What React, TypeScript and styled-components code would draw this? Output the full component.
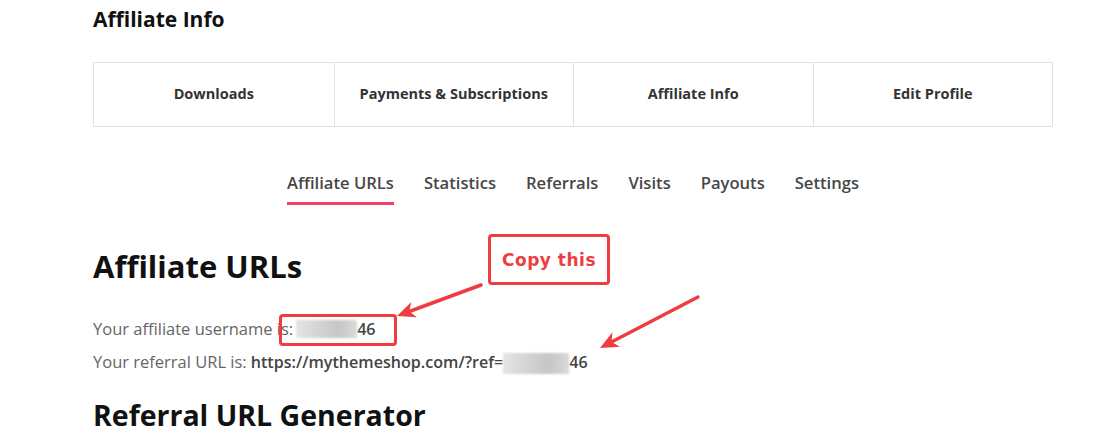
import styled, { createGlobalStyle } from 'styled-components';

const GlobalStyle = createGlobalStyle`
  html, body {
    margin: 0;
    padding: 0;
    background: #ffffff;
  }
  body {
    font-family: "Open Sans", Arial, sans-serif;
    color: #333;
  }
`;

const Page = styled.div`
  position: relative;
  width: 1115px;
  height: 448px;
  overflow: hidden;
  padding-left: 93px;
  box-sizing: border-box;
`;

const Wrap = styled.div`
  width: 960px;
`;

const PageTitle = styled.h1`
  margin: 0;
  padding-top: 6px;
  font-size: 21px;
  font-weight: 700;
  line-height: 26px;
  color: #111;
`;

const NavGrid = styled.div`
  display: grid;
  grid-template-columns: repeat(4, 1fr);
  margin-top: 30px;
  border: 1px solid #e2e2e2;
  height: 65px;
  box-sizing: border-box;
`;

const NavCell = styled.a`
  display: flex;
  align-items: center;
  justify-content: center;
  font-size: 14.5px;
  font-weight: 700;
  color: #333;
  text-decoration: none;
  padding-bottom: 2px;
  & + & {
    border-left: 1px solid #e2e2e2;
  }
`;

const Tabs = styled.div`
  display: flex;
  justify-content: center;
  gap: 30px;
  margin-top: 46px;
`;

const Tab = styled.a<{ $active?: boolean }>`
  font-size: 16.6px;
  font-weight: 600;
  color: #474747;
  text-decoration: none;
  padding-bottom: 9px;
  border-bottom: 3px solid ${(p) => (p.$active ? '#f0416b' : 'transparent')};
  line-height: 20px;
`;

const Heading = styled.h2<{ $size: number; $top: number }>`
  margin: ${(p) => p.$top}px 0 0;
  font-size: ${(p) => p.$size}px;
  font-weight: 700;
  line-height: 1.2;
  color: #111;
`;

const InfoLine = styled.p<{ $top?: number }>`
  margin: ${(p) => p.$top ?? 0}px 0 0;
  font-size: 16.5px;
  height: 33px;
  color: #666;
  display: flex;
  align-items: center;
`;

const Strong = styled.span<{ $gap?: number }>`
  font-size: 16.1px;
  font-weight: 600;
  color: #444;
  margin-left: ${(p) => p.$gap ?? 0}px;
`;

const Blurred = styled.span<{ $w: number; $h: number; $gap?: number }>`
  display: inline-block;
  width: ${(p) => p.$w}px;
  height: ${(p) => p.$h}px;
  margin-left: ${(p) => p.$gap ?? 0}px;
  background: linear-gradient(90deg, #e4e4e4, #d0d0d0 45%, #c6c6c6 70%, #dadada);
  filter: blur(0.8px);
`;

const Annot = styled.div`
  position: absolute;
  border: 3px solid #ee3d40;
  border-radius: 4px;
  box-sizing: border-box;
`;

const CopyBox = styled(Annot)`
  left: 488px;
  top: 234px;
  width: 122px;
  height: 51px;
  display: flex;
  align-items: center;
  justify-content: center;
  font-family: "DejaVu Sans", Verdana, sans-serif;
  font-weight: 700;
  font-size: 17px;
  letter-spacing: 0.5px;
  color: #ee3d40;
`;

const NameBox = styled(Annot)`
  left: 279px;
  top: 314px;
  width: 118px;
  height: 32px;
`;

const Arrows = styled.svg`
  position: absolute;
  left: 0;
  top: 0;
  pointer-events: none;
`;

const navItems = ['Downloads', 'Payments & Subscriptions', 'Affiliate Info', 'Edit Profile'];
const tabs = ['Affiliate URLs', 'Statistics', 'Referrals', 'Visits', 'Payouts', 'Settings'];

const Arrow = ({ x1, y1, x2, y2 }: { x1: number; y1: number; x2: number; y2: number }) => {
  const ang = Math.atan2(y2 - y1, x2 - x1);
  const len = 20;
  const spread = 0.42;
  const ax = x2 - len * Math.cos(ang - spread);
  const ay = y2 - len * Math.sin(ang - spread);
  const bx = x2 - len * Math.cos(ang + spread);
  const by = y2 - len * Math.sin(ang + spread);
  const mx = x2 - 13 * Math.cos(ang);
  const my = y2 - 13 * Math.sin(ang);
  return (
    <g>
      <line x1={x1} y1={y1} x2={mx} y2={my} stroke="#ee3d40" strokeWidth={3.5} strokeLinecap="round" />
      <polygon points={`${x2},${y2} ${ax},${ay} ${mx},${my} ${bx},${by}`} fill="#ee3d40" />
    </g>
  );
};

export default function App() {
  return (
    <Page>
      <GlobalStyle />
      <Wrap>
        <PageTitle>Affiliate Info</PageTitle>
        <NavGrid>
          {navItems.map((n) => (
            <NavCell key={n}>{n}</NavCell>
          ))}
        </NavGrid>
        <Tabs>
          {tabs.map((t, i) => (
            <Tab key={t} $active={i === 0}>
              {t}
            </Tab>
          ))}
        </Tabs>
        <Heading $size={31} $top={43}>Affiliate URLs</Heading>
        <InfoLine $top={27}>
          Your affiliate username is:
          <Blurred $w={61} $h={18} $gap={3} />
          <Strong>46</Strong>
        </InfoLine>
        <InfoLine>
          Your referral URL is:
          <Strong $gap={4}>https://mythemeshop.com/?ref=</Strong>
          <Blurred $w={66} $h={21} style={{ marginTop: 3 }} />
          <Strong>46</Strong>
        </InfoLine>
        <Heading $size={28.5} $top={20}>Referral URL Generator</Heading>
      </Wrap>
      <CopyBox>Copy this</CopyBox>
      <NameBox />
      <Arrows width={1115} height={448}>
        <Arrow x1={481} y1={285} x2={397} y2={316} />
        <Arrow x1={698} y1={297} x2={600} y2={348} />
      </Arrows>
    </Page>
  );
}
